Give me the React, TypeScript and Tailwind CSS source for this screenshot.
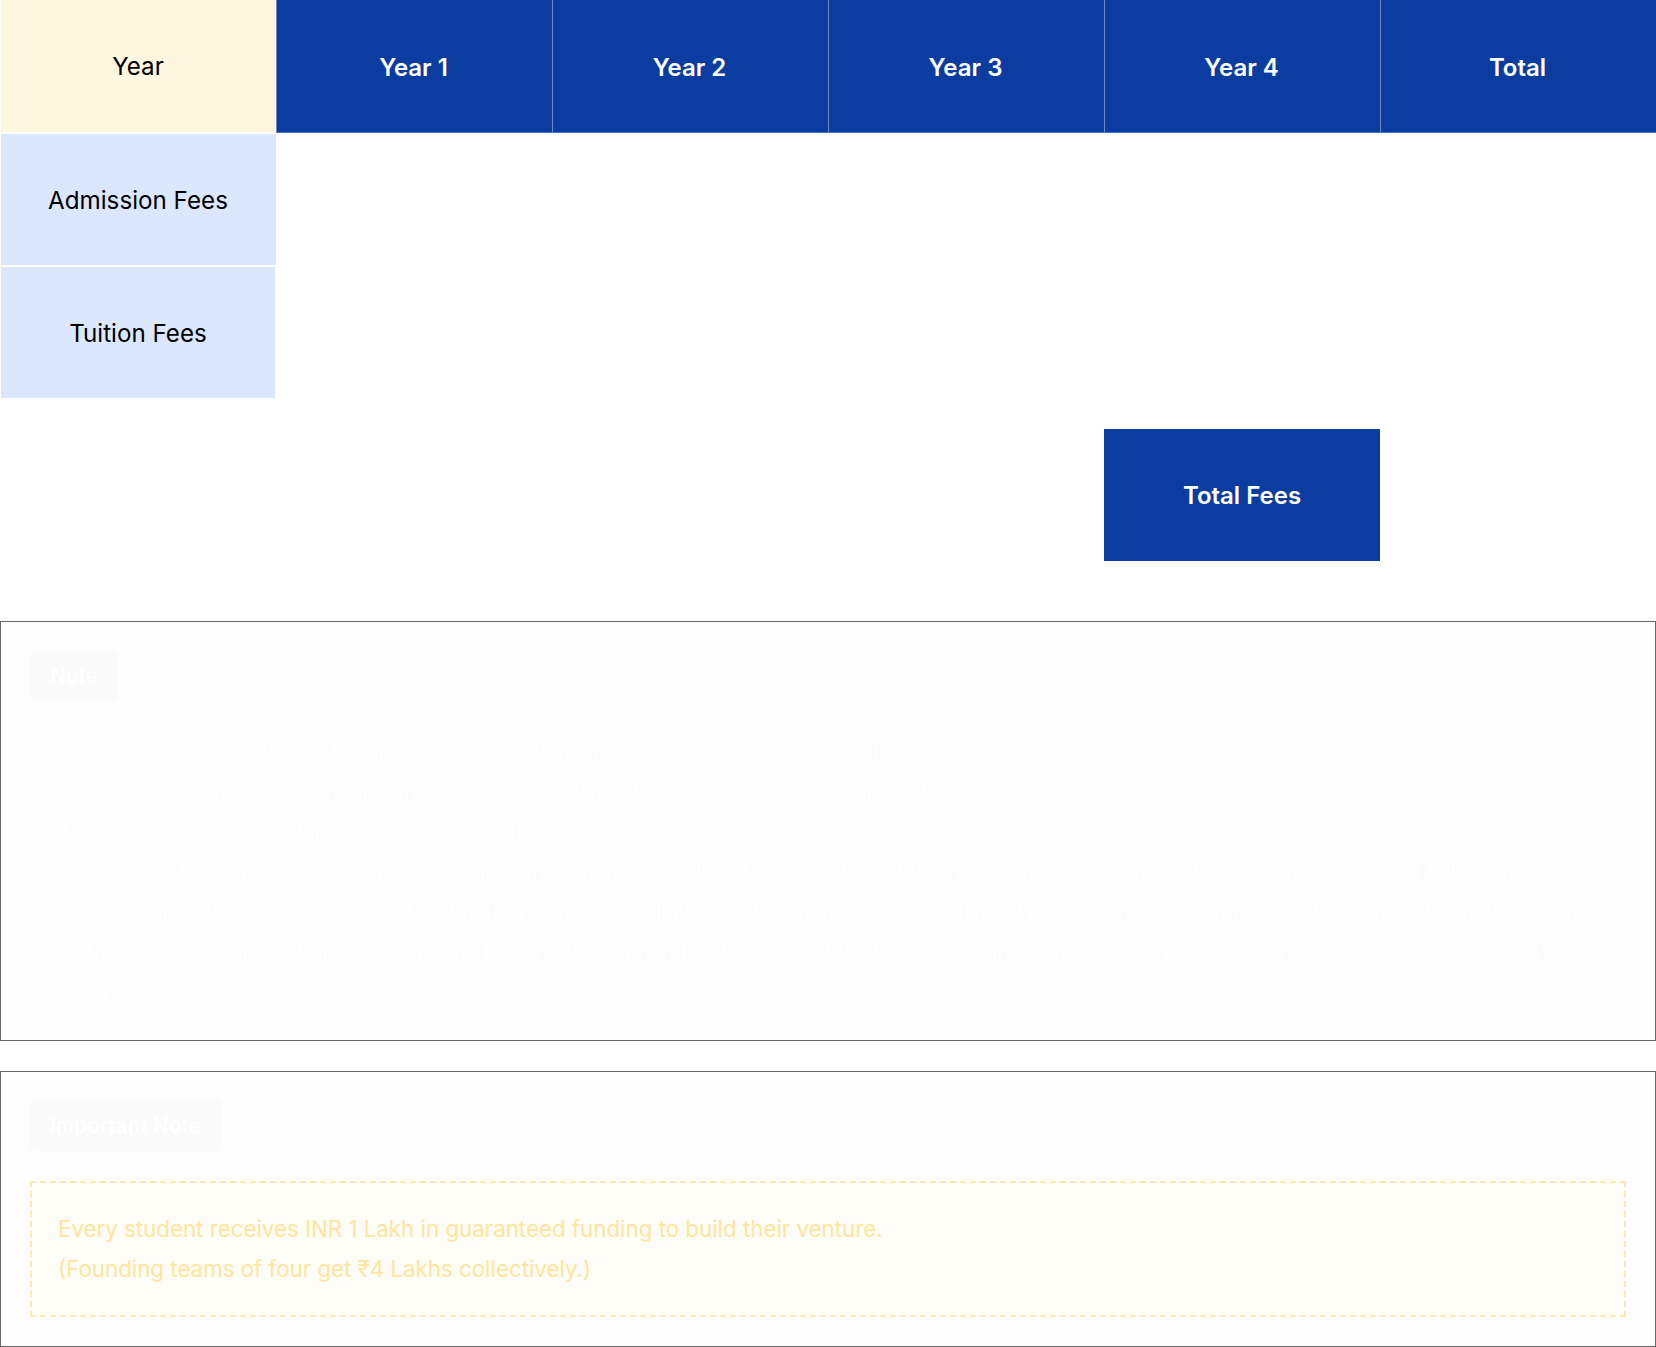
const font = "[font-family:Inter,'Noto_Sans',sans-serif]";

function HeaderCell({ label }: { label: string }) {
  return (
    <div className="flex items-center justify-center border-b border-l border-b-[#4a70c2] border-l-[#6d8ac6] bg-[#0b3ca0] pr-[2px] pt-1 text-[24px] font-semibold text-white">
      {label}
    </div>
  );
}

function SideCell({ label, bg, narrow }: { label: string; bg: string; narrow?: boolean }) {
  return (
    <div className="border-b border-l border-t border-white first:border-t-0">
      <div
        className={`flex h-full items-center justify-center pt-[3px] text-[24.2px] font-[425] text-black ${bg} ${
          narrow ? "w-[274px]" : "w-full pr-px"
        }`}
      >
        {label}
      </div>
    </div>
  );
}

const items: string[] = [
  "The fee is inclusive of GST *Additional costs (global immersions, degree costs, etc) are not included in the fee",
  "Merit & Need based scholarships are selectively available for better access to Learn Natives.",
  "*The above fee does not include accommodation fee*",
  "Admissions to the partnered degree programs are managed solely at the discretion of the respective universities. Students must meet and follow all academic and administrative requirements set by the university to be eligible for the degree. These university-led degree programs operate independently from Learn Natives' residential and training programs. Learn Natives provides its own certificate-based learning programs. We are not a university or college, and we do not award academic degrees.",
];

function Badge({ label }: { label: string }) {
  return (
    <div className="inline-flex h-[50px] items-center rounded-[6px] bg-[#fafafa] px-5 text-[21px] font-medium text-white">
      {label}
    </div>
  );
}

export default function App() {
  return (
    <div className={`w-[1656px] bg-white ${font}`}>
      <div className="grid grid-cols-6 grid-rows-[133px_133px_133px]">
        <SideCell label="Year" bg="bg-[#fff6df]" />
        <HeaderCell label="Year 1" />
        <HeaderCell label="Year 2" />
        <HeaderCell label="Year 3" />
        <HeaderCell label="Year 4" />
        <HeaderCell label="Total" />
        <SideCell label="Admission Fees" bg="bg-[#dbe7ff]" />
        <div className="col-span-5" />
        <SideCell label="Tuition Fees" bg="bg-[#dbe7ff]" narrow />
        <div className="col-span-5" />
      </div>

      <div className="mt-[30px] grid grid-cols-6">
        <div className="col-start-5 flex h-[132px] items-center justify-center bg-[#0b3ca0] pt-[2px] text-[24px] font-semibold text-white">
          Total Fees
        </div>
      </div>

      <section className="mt-[60px] h-[420px] border border-[#666666] bg-[#fdfdfd] p-[29px]">
        <Badge label="Note" />
        <ol className="mt-[31px] list-decimal pl-[30px] text-[20.9px] leading-[40px] text-white">
          {items.map((t) => (
            <li key={t}>{t}</li>
          ))}
        </ol>
      </section>

      <section className="mt-[30px] h-[276px] border border-[#666666] bg-[#fdfdfd] p-[29px]">
        <Badge label="Important Note" />
        <div className="mt-[30px] border-2 border-dashed border-[#feeab0] bg-[#fdfcf7] px-[26px] py-[26px] text-[22.3px] leading-[40px] text-[#ffe69c]">
          <p>Every student receives INR 1 Lakh in guaranteed funding to build their venture.</p>
          <p>(Founding teams of four get ₹4 Lakhs collectively.)</p>
        </div>
      </section>
    </div>
  );
}
